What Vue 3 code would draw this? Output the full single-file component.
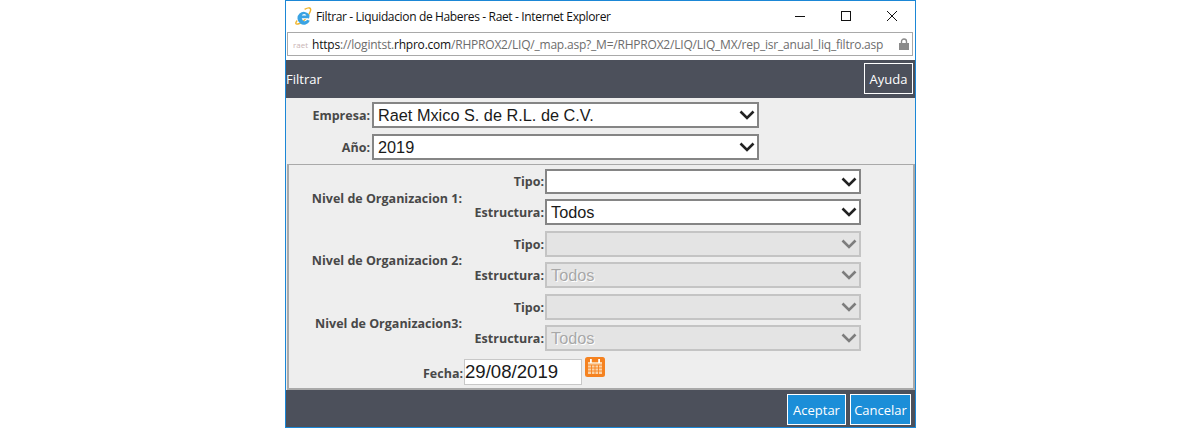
<template>
  <div class="page">
    <div class="window">
      <div class="titlebar">
        <svg class="ie-logo" viewBox="0 0 18 18" width="18" height="18">
          <path d="M3.2 13.5C1 16 1.5 17.6 4 17c3-.7 8-4.5 10.5-9C16.6 4.3 17.6 1.8 15.6 1c-1.2-.5-3 .2-5 1.4" fill="none" stroke="#f0b429" stroke-width="1.4" />
          <path d="M14.6 11.8H8a2.8 2.8 0 0 0 5.2 1l2.6.9A6.4 6.4 0 1 1 15.4 8c.2 1.1.1 2.6-.8 3.8z" fill="#3aa3e3" />
          <path d="M7.8 8.6h4.6a2.4 2.4 0 0 0-4.6 0z" fill="#fff" />
          <path d="M7.9 11.6h6.4" stroke="#fff" stroke-width="0.8" />
        </svg>
        <span class="title-text">Filtrar - Liquidacion de Haberes - Raet - Internet Explorer</span>
        <div class="win-controls">
          <svg viewBox="0 0 12 12" width="12" height="12"><path d="M1 6.5h10" stroke="#111" fill="none" /></svg>
          <svg viewBox="0 0 12 12" width="12" height="12"><rect x="1.5" y="1.5" width="9" height="9" stroke="#111" fill="none" /></svg>
          <svg viewBox="0 0 12 12" width="12" height="12"><path d="M1 1l10 10M11 1L1 11" stroke="#111" fill="none" /></svg>
        </div>
      </div>

      <div class="addressbar">
        <span class="favicon">raet</span>
        <span class="url"><b>https</b>://logintst.<b>rhpro.com</b>/RHPROX2/LIQ/_map.asp?_M=/RHPROX2/LIQ/LIQ_MX/rep_isr_anual_liq_filtro.asp</span>
        <svg class="lock" viewBox="0 0 10 12" width="10" height="12">
          <path d="M2.5 5V3.5a2.5 2.5 0 0 1 5 0V5" fill="none" stroke="#8a8a8a" stroke-width="1.4" />
          <rect x="0" y="5" width="10" height="7" fill="#8a8a8a" />
        </svg>
      </div>

      <div class="head">
        <span>Filtrar</span>
        <button type="button" class="btn-help">Ayuda</button>
      </div>

      <div class="content">
        <div class="top-fields">
          <div v-for="f in topFields" :key="f.label" class="top-row">
            <label class="lbl">{{ f.label }}</label>
            <div class="sel sel-top">
              <span>{{ f.value }}</span>
              <svg class="chev" viewBox="0 0 16 10" width="16" height="10"><path d="M1.5 1.5L8 8l6.5-6.5" fill="none" stroke-width="2.6" /></svg>
            </div>
          </div>
        </div>

        <div class="box">
          <div v-for="g in groups" :key="g.label" class="group">
            <label class="lbl group-lbl">{{ g.label }}</label>
            <div class="group-rows">
              <div class="sub-row">
                <label class="lbl">Tipo:</label>
                <div class="sel sel-sub" :class="{ off: g.disabled }">
                  <span></span>
                  <svg class="chev" viewBox="0 0 16 10" width="16" height="10"><path d="M1.5 1.5L8 8l6.5-6.5" fill="none" stroke-width="2.6" /></svg>
                </div>
              </div>
              <div class="sub-row">
                <label class="lbl">Estructura:</label>
                <div class="sel sel-sub" :class="{ off: g.disabled }">
                  <span>Todos</span>
                  <svg class="chev" viewBox="0 0 16 10" width="16" height="10"><path d="M1.5 1.5L8 8l6.5-6.5" fill="none" stroke-width="2.6" /></svg>
                </div>
              </div>
            </div>
          </div>

          <div class="date-row">
            <label class="lbl">Fecha:</label>
            <div class="date-input">29/08/2019</div>
            <svg class="cal" viewBox="0 0 20 20" width="20" height="20">
              <rect width="20" height="20" rx="2.5" fill="#f58220" />
              <path d="M3 5h14v12H3z" fill="#fbd3a8" />
              <path d="M3 8h14M3 11h14M3 14h14M6.5 8v9M10 8v9M13.5 8v9" stroke="#f58220" stroke-width="0.9" fill="none" />
              <rect x="5" y="2" width="1.8" height="4" fill="#fff" />
              <rect x="13.2" y="2" width="1.8" height="4" fill="#fff" />
            </svg>
          </div>
        </div>
      </div>

      <div class="foot">
        <button type="button" class="btn-blue accept">Aceptar</button>
        <button type="button" class="btn-blue cancel">Cancelar</button>
      </div>
    </div>
  </div>
</template>

<script setup>
const topFields = [
  { label: 'Empresa:', value: 'Raet Mxico S. de R.L. de C.V.' },
  { label: 'Año:', value: '2019' },
]

const groups = [
  { label: 'Nivel de Organizacion 1:', disabled: false },
  { label: 'Nivel de Organizacion 2:', disabled: true },
  { label: 'Nivel de Organizacion3:', disabled: true },
]
</script>

<style>
html,
body {
  margin: 0;
  background: #fff;
}
</style>

<style scoped>
.page {
  display: flex;
  width: 1200px;
  height: 428px;
  overflow: hidden;
}
.window {
  box-sizing: border-box;
  width: 631px;
  margin-left: 285px;
  height: 428px;
  border: 1px solid #1b87d6;
  display: flex;
  flex-direction: column;
  background: #fff;
  font-family: "Open Sans", "Liberation Sans", sans-serif;
}
.titlebar {
  height: 30px;
  flex-shrink: 0;
  display: flex;
  align-items: center;
  padding-left: 8px;
  font-size: 12px;
  color: #111;
}
.ie-logo {
  margin-right: 4px;
}
.title-text {
  flex: 1;
  letter-spacing: -0.35px;
}
.win-controls {
  display: flex;
  gap: 34px;
  margin-right: 17px;
}
.addressbar {
  height: 24px;
  flex-shrink: 0;
  margin: 1px 2px 4px 1px;
  box-sizing: border-box;
  border: 1px solid #a9a9a9;
  display: flex;
  align-items: center;
  padding: 0 3px 0 5px;
  font-size: 12px;
  color: #6d6d6d;
}
.favicon {
  width: 19px;
  flex-shrink: 0;
  font-size: 8px;
  color: #c9b4b4;
}
.url {
  flex: 1;
  min-width: 0;
  white-space: nowrap;
  letter-spacing: -0.21px;
}
.url b {
  font-weight: 400;
  color: #111;
}
.lock {
  flex-shrink: 0;
}
.head {
  height: 38px;
  flex-shrink: 0;
  box-sizing: border-box;
  background: #4c505b;
  color: #fff;
  font-size: 13px;
  display: flex;
  align-items: center;
  justify-content: space-between;
  padding: 0 2px 1px 0;
}
.btn-help {
  box-sizing: border-box;
  width: 49px;
  height: 31px;
  padding: 0;
  background: transparent;
  border: 1px solid #fff;
  color: #fff;
  font: 13px "Open Sans", "Liberation Sans", sans-serif;
}
.content {
  flex: 1;
  background: #eeeeee;
  display: flex;
  flex-direction: column;
}
.top-fields {
  padding-top: 4px;
  display: flex;
  flex-direction: column;
  gap: 6px;
}
.top-row {
  display: flex;
  align-items: center;
  justify-content: flex-end;
  width: 473px;
  gap: 2px;
}
.lbl {
  font-size: 12.5px;
  font-weight: 700;
  color: #484848;
  white-space: nowrap;
}
.sel {
  box-sizing: border-box;
  display: flex;
  align-items: center;
  justify-content: space-between;
  background: #fff;
  border: 2px solid #858585;
  padding: 0 2px 0 4px;
  font-family: "Liberation Sans", Arial, sans-serif;
  font-size: 16.3px;
  color: #1a1a1a;
}
.sel-top {
  width: 387px;
  height: 26px;
}
.chev {
  flex-shrink: 0;
  stroke: #222;
}
.box {
  box-sizing: border-box;
  flex: 1;
  margin: 4px 0 0 1px;
  border: 2px solid #a9a9a9;
  border-width: 1px 2px 2px 2px;
  padding-top: 4px;
  display: flex;
  flex-direction: column;
  gap: 6px;
}
.group {
  display: flex;
  align-items: center;
}
.group-lbl {
  width: 173px;
  padding-top: 2px;
  text-align: right;
}
.group-rows {
  display: flex;
  flex-direction: column;
  gap: 5px;
}
.sub-row {
  display: flex;
  align-items: center;
  justify-content: flex-end;
  width: 399px;
  gap: 1px;
}
.sel-sub {
  width: 316px;
  height: 26px;
}
.group:first-child .sub-row:first-child .sel-sub {
  height: 25px;
}
.sel.off {
  background: #e4e4e4;
  border: 2px solid #c4c4c4;
  color: #a8a8a8;
  text-shadow: 1px 1px 0 #fff;
}
.sel.off .chev {
  stroke: #7d7d7d;
}
.date-row {
  display: flex;
  align-items: flex-start;
  padding-left: 134px;
}
.date-row .lbl {
  margin-top: 8px;
  width: 40px;
  margin-right: 1px;
}
.date-input {
  box-sizing: border-box;
  width: 118px;
  height: 26px;
  background: #fff;
  border: 1px solid #c8c8c8;
  margin-top: 2px;
  font-family: "Liberation Sans", Arial, sans-serif;
  font-size: 18.6px;
  line-height: 23px;
  color: #1a1a1a;
}
.cal {
  margin-left: 3px;
}
.foot {
  height: 37px;
  flex-shrink: 0;
  background: #4c505b;
  display: flex;
  justify-content: flex-end;
  align-items: center;
  gap: 4px;
  padding: 2px 4px 0 0;
  box-sizing: border-box;
}
.btn-blue {
  box-sizing: border-box;
  height: 31px;
  padding: 0;
  background: #1b8ed8;
  border: 1px solid #fff;
  color: #fff;
  font: 13px "Open Sans", "Liberation Sans", sans-serif;
}
.accept {
  width: 59px;
}
.cancel {
  width: 61px;
}
</style>
